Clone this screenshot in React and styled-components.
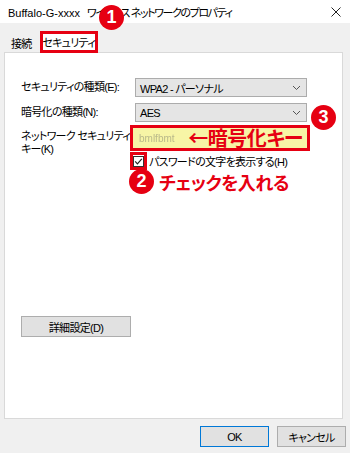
import styled, { createGlobalStyle } from "styled-components";

const GlobalStyle = createGlobalStyle`
  html, body {
    margin: 0;
    padding: 0;
    background: #f0f0f0;
  }
  body {
    font-family: "Liberation Sans", "Noto Sans CJK JP", sans-serif;
    font-size: 11px;
    letter-spacing: -0.7px;
    font-feature-settings: "palt" 1;
    color: #000;
  }
`;

const Window = styled.div`
  position: relative;
  width: 350px;
  height: 453px;
  background: #f0f0f0;
  display: flex;
  flex-direction: column;
  overflow: hidden;
`;

const TitleBar = styled.div`
  height: 23px;
  background: #fff;
  display: flex;
  align-items: center;
  justify-content: space-between;
  padding: 0 9px 0 8px;
  white-space: nowrap;
  letter-spacing: -1.4px;
`;

const TitleLatin = styled.span`
  letter-spacing: 0;
  margin-right: 7px;
`;

const CloseIcon = () => (
  <svg width="10" height="10" viewBox="0 0 10 10">
    <path d="M0.5 0.5 L9.5 9.5 M9.5 0.5 L0.5 9.5" stroke="#222" strokeWidth="1" />
  </svg>
);

const TabStrip = styled.div`
  display: flex;
  align-items: flex-end;
  height: 29px;
  padding-left: 5px;
`;

const Tab = styled.div`
  height: 19px;
  display: flex;
  align-items: center;
  justify-content: center;
  padding: 0 6px;
  box-sizing: border-box;
  white-space: nowrap;
  ${(p) =>
    p.$active &&
    `
    width: 58px;
    height: 22px;
    padding: 0;
    margin-bottom: -1px;
    margin-left: 2px;
    background: #fff;
    border: 3px solid #e60012;
    position: relative;
    z-index: 2;
  `}
`;

const Panel = styled.div`
  margin: 0 7px 0 4px;
  height: 367px;
  background: #fff;
  border: 1px solid #d9d9d9;
  box-sizing: border-box;
  padding: 25px 0 0 16px;
  display: flex;
  flex-direction: column;
`;

const FieldRow = styled.div`
  display: grid;
  grid-template-columns: 114px 172px;
  align-items: center;
  margin-top: ${(p) => p.$gap || 0}px;
  position: relative;
`;

const Label = styled.div`
  line-height: 13px;
  white-space: nowrap;
  ${(p) => p.$top && `align-self: start; padding-top: 5px; margin-bottom: -5px;`}
`;

const Select = styled.div`
  height: 19px;
  box-sizing: border-box;
  background: #e5e5e5;
  border: 1px solid #acacac;
  display: flex;
  align-items: center;
  justify-content: space-between;
  padding: 0 5px 0 4px;
`;

const Chevron = () => (
  <svg width="9" height="6" viewBox="0 0 9 6">
    <path d="M1 1 L4.5 4.5 L8 1" fill="none" stroke="#555" strokeWidth="1" />
  </svg>
);

const KeyBox = styled.div`
  margin-left: -5px;
  width: 180px;
  height: 26px;
  box-sizing: border-box;
  border: 3px solid #e60012;
  background: #f7f5a6;
  display: flex;
  align-items: center;
  justify-content: space-between;
  padding: 0 4px 0 6px;
`;

const Blurred = styled.span`
  color: #b9b98a;
  font-size: 10px;
  letter-spacing: 0;
  filter: blur(0.7px);
`;

const RedText = styled.span`
  color: #e60012;
  font-family: "Noto Sans CJK JP", sans-serif;
  font-size: ${(p) => p.$size || 20}px;
  font-weight: bold;
  line-height: 1;
  letter-spacing: -0.5px;
  white-space: nowrap;
`;

const Badge = styled.div`
  width: 25px;
  height: 25px;
  border-radius: 50%;
  background: #e60012;
  color: #fff;
  font-weight: bold;
  font-size: 18px;
  letter-spacing: 0;
  display: flex;
  align-items: center;
  justify-content: center;
  flex-shrink: 0;
`;

const FloatingBadge = styled(Badge)`
  position: absolute;
  left: ${(p) => p.$x}px;
  top: ${(p) => p.$y}px;
  z-index: 5;
`;

const CheckRow = styled.div`
  display: flex;
  align-items: center;
  margin: 1px 0 0 109px;
  white-space: nowrap;
`;

const CheckFrame = styled.div`
  width: 17px;
  height: 18px;
  box-sizing: border-box;
  border: 3px solid #e60012;
  display: flex;
  align-items: center;
  justify-content: center;
  margin-right: 2px;
`;

const CheckBox = () => (
  <svg width="11" height="11" viewBox="0 0 11 11">
    <rect x="0.5" y="0.5" width="10" height="10" fill="#fff" stroke="#333" />
    <path d="M2.2 5.4 L4.4 7.8 L8.8 2.8" fill="none" stroke="#222" strokeWidth="1.2" />
  </svg>
);

const NoteRow = styled.div`
  display: flex;
  align-items: center;
  gap: 5px;
  margin: -1px 0 0 108px;
`;

const Button = styled.div`
  width: ${(p) => p.$w}px;
  height: 21px;
  box-sizing: border-box;
  background: #e1e1e1;
  border: 1px solid ${(p) => (p.$primary ? "#0078d7" : "#adadad")};
  display: flex;
  align-items: center;
  justify-content: center;
`;

const AdvancedWrap = styled.div`
  margin-top: 122px;
`;

const Footer = styled.div`
  display: flex;
  justify-content: flex-end;
  gap: 8px;
  padding: 7px 4px 0 0;
`;

export default function App() {
  return (
    <Window>
      <GlobalStyle />
      <TitleBar>
        <span>
          <TitleLatin>Buffalo-G-xxxx</TitleLatin>
          ワイヤレス ネットワークのプロパティ
        </span>
        <CloseIcon />
      </TitleBar>
      <FloatingBadge $x={99} $y={5}>1</FloatingBadge>
      <TabStrip>
        <Tab>接続</Tab>
        <Tab $active>セキュリティ</Tab>
      </TabStrip>
      <Panel>
        <FieldRow>
          <Label>セキュリティの種類(E):</Label>
          <Select>
            <span>WPA2 - パーソナル</span>
            <Chevron />
          </Select>
        </FieldRow>
        <FieldRow $gap={6}>
          <Label>暗号化の種類(N):</Label>
          <Select>
            <span>AES</span>
            <Chevron />
          </Select>
          <FloatingBadge $x={290} $y={2}>3</FloatingBadge>
        </FieldRow>
        <FieldRow $gap={3}>
          <Label $top>
            ネットワーク セキュリティ
            <br />
            キー(K)
          </Label>
          <KeyBox>
            <Blurred>bmlfbmt</Blurred>
            <RedText>←暗号化キー</RedText>
          </KeyBox>
        </FieldRow>
        <CheckRow>
          <CheckFrame>
            <CheckBox />
          </CheckFrame>
          <span>パスワードの文字を表示する(H)</span>
        </CheckRow>
        <NoteRow>
          <Badge>2</Badge>
          <RedText $size={18}>チェックを入れる</RedText>
        </NoteRow>
        <AdvancedWrap>
          <Button $w={110}>詳細設定(D)</Button>
        </AdvancedWrap>
      </Panel>
      <Footer>
        <Button $w={69} $primary>OK</Button>
        <Button $w={69}>キャンセル</Button>
      </Footer>
    </Window>
  );
}
